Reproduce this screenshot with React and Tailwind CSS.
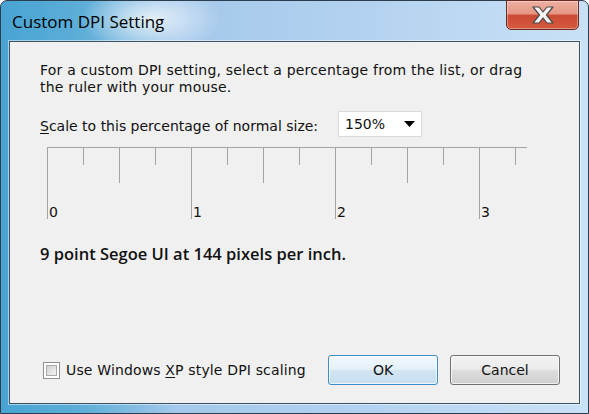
import React from "react";

const majors = [0, 144, 288, 432];
const mediums = [72, 216, 360];
const shorts = [36, 108, 180, 252, 324, 396, 468];

function Ruler() {
  return (
    <svg width="481" height="75" className="block ml-[37px] mt-[10px]">
      <line x1="0" y1="0.5" x2="480" y2="0.5" stroke="#a3a3a3" />
      {majors.map((x) => (
        <line key={"M" + x} x1={x + 0.5} y1="0" x2={x + 0.5} y2="72" stroke="#a3a3a3" />
      ))}
      {mediums.map((x) => (
        <line key={"m" + x} x1={x + 0.5} y1="0" x2={x + 0.5} y2="36" stroke="#a3a3a3" />
      ))}
      {shorts.map((x) => (
        <line key={"s" + x} x1={x + 0.5} y1="0" x2={x + 0.5} y2="18" stroke="#a3a3a3" />
      ))}
      {majors.map((x, i) => (
        <text
          key={"t" + x}
          x={x + 2}
          y="69.5"
          fontFamily="DejaVu Sans, sans-serif"
          fontSize="14"
          fill="#111"
        >
          {i}
        </text>
      ))}
    </svg>
  );
}

export default function App() {
  return (
    <div className="w-[589px] h-[414px] overflow-hidden bg-white font-['DejaVu_Sans',sans-serif] text-[14px] text-[#111]">
      <div className="relative flex flex-col w-full h-full border border-[#2c3d4e] rounded-t-[7px] px-[8px] pb-[9px] bg-[radial-gradient(ellipse_70px_34px_at_150px_18px,rgba(255,255,255,0.75),rgba(255,255,255,0)),linear-gradient(to_right,#48a4d3_0%,#5eaed8_14%,#a4c8eb_30%,#b2d1ef_60%,#c9e1f6_100%)]">
        {/* title bar */}
        <div className="h-[40px] flex items-center pl-[3px] pt-[1px] font-['Open_Sans',sans-serif] text-[17px] text-black">
          Custom DPI Setting
        </div>

        {/* close button */}
        <div className="absolute top-[-1px] left-[505px] w-[73px] h-[30px] rounded-b-[5px] border border-[#6b2a22] bg-[linear-gradient(#eeb0a2_0%,#e59684_45%,#cc4a33_52%,#d45a40_100%)] flex items-center justify-center shadow-[inset_0_0_0_1px_rgba(255,255,255,0.35)]">
          <svg width="30" height="20" viewBox="0 0 30 20">
            <path
              d="M5 2 H11 L15 7 L19 2 H25 L18.5 10 L25 18 H19 L15 13 L11 18 H5 L11.5 10 Z"
              fill="#f4f4f4"
              stroke="#4a4a4a"
              strokeWidth="1.2"
              strokeLinejoin="round"
            />
          </svg>
        </div>

        {/* client area */}
        <div className="flex-1 flex flex-col bg-[#f0f0f0] border border-[#3a5264] shadow-[0_0_0_1px_rgba(255,255,255,0.5)]">
          <p className="pl-[30px] pt-[20px] leading-[17px] tracking-[0.2px]">
            For a custom DPI setting, select a percentage from the list, or drag
            <br />
            the ruler with your mouse.
          </p>

          <div className="flex items-start mt-[15px] pl-[30px]">
            <div className="w-[298px] mt-[7px] leading-[17px]">
              <span className="underline underline-offset-2">S</span>cale to this percentage of normal size:
            </div>
            <div className="w-[84px] h-[26px] bg-white border border-[#dadada] flex items-center justify-between pl-[6px] pr-[6px] leading-[17px]">
              <span>150%</span>
              <svg width="11" height="6" viewBox="0 0 11 6">
                <path d="M0 0 H11 L5.5 6 Z" fill="#000" />
              </svg>
            </div>
          </div>

          <Ruler />

          <div className="pl-[30px] mt-[21px] font-['Open_Sans',sans-serif] font-semibold text-[16.5px] leading-[22px]">
            9 point Segoe UI at 144 pixels per inch.
          </div>

          <div className="flex-1" />

          <div className="flex items-center pl-[33px] pr-[19px] pb-[18px]">
            <div className="w-[17px] h-[17px] border border-[#8e8f8f] bg-white p-[2px]">
              <div className="w-full h-full border border-[#a9a9a9] bg-[linear-gradient(135deg,#d2d2d2,#f2f2f2)]" />
            </div>
            <span className="ml-[6px] leading-[17px] tracking-[0.15px]">
              Use Windows <span className="underline underline-offset-2">X</span>P style DPI scaling
            </span>
            <div className="flex-1" />
            <button className="w-[110px] h-[30px] rounded-[3px] border border-[#3c8dc4] bg-[linear-gradient(#f1f8fd_0%,#e4f0f8_48%,#d2e5f2_52%,#c7def0_100%)] shadow-[inset_0_0_0_1px_rgba(255,255,255,0.7)] text-[14px] leading-[17px]">
              OK
            </button>
            <button className="ml-[12px] w-[110px] h-[30px] rounded-[3px] border border-[#707070] bg-[linear-gradient(#f2f2f2_0%,#ebebeb_48%,#dddddd_52%,#cfcfcf_100%)] shadow-[inset_0_0_0_1px_rgba(255,255,255,0.7)] text-[14px] leading-[17px]">
              Cancel
            </button>
          </div>
        </div>
      </div>
    </div>
  );
}
